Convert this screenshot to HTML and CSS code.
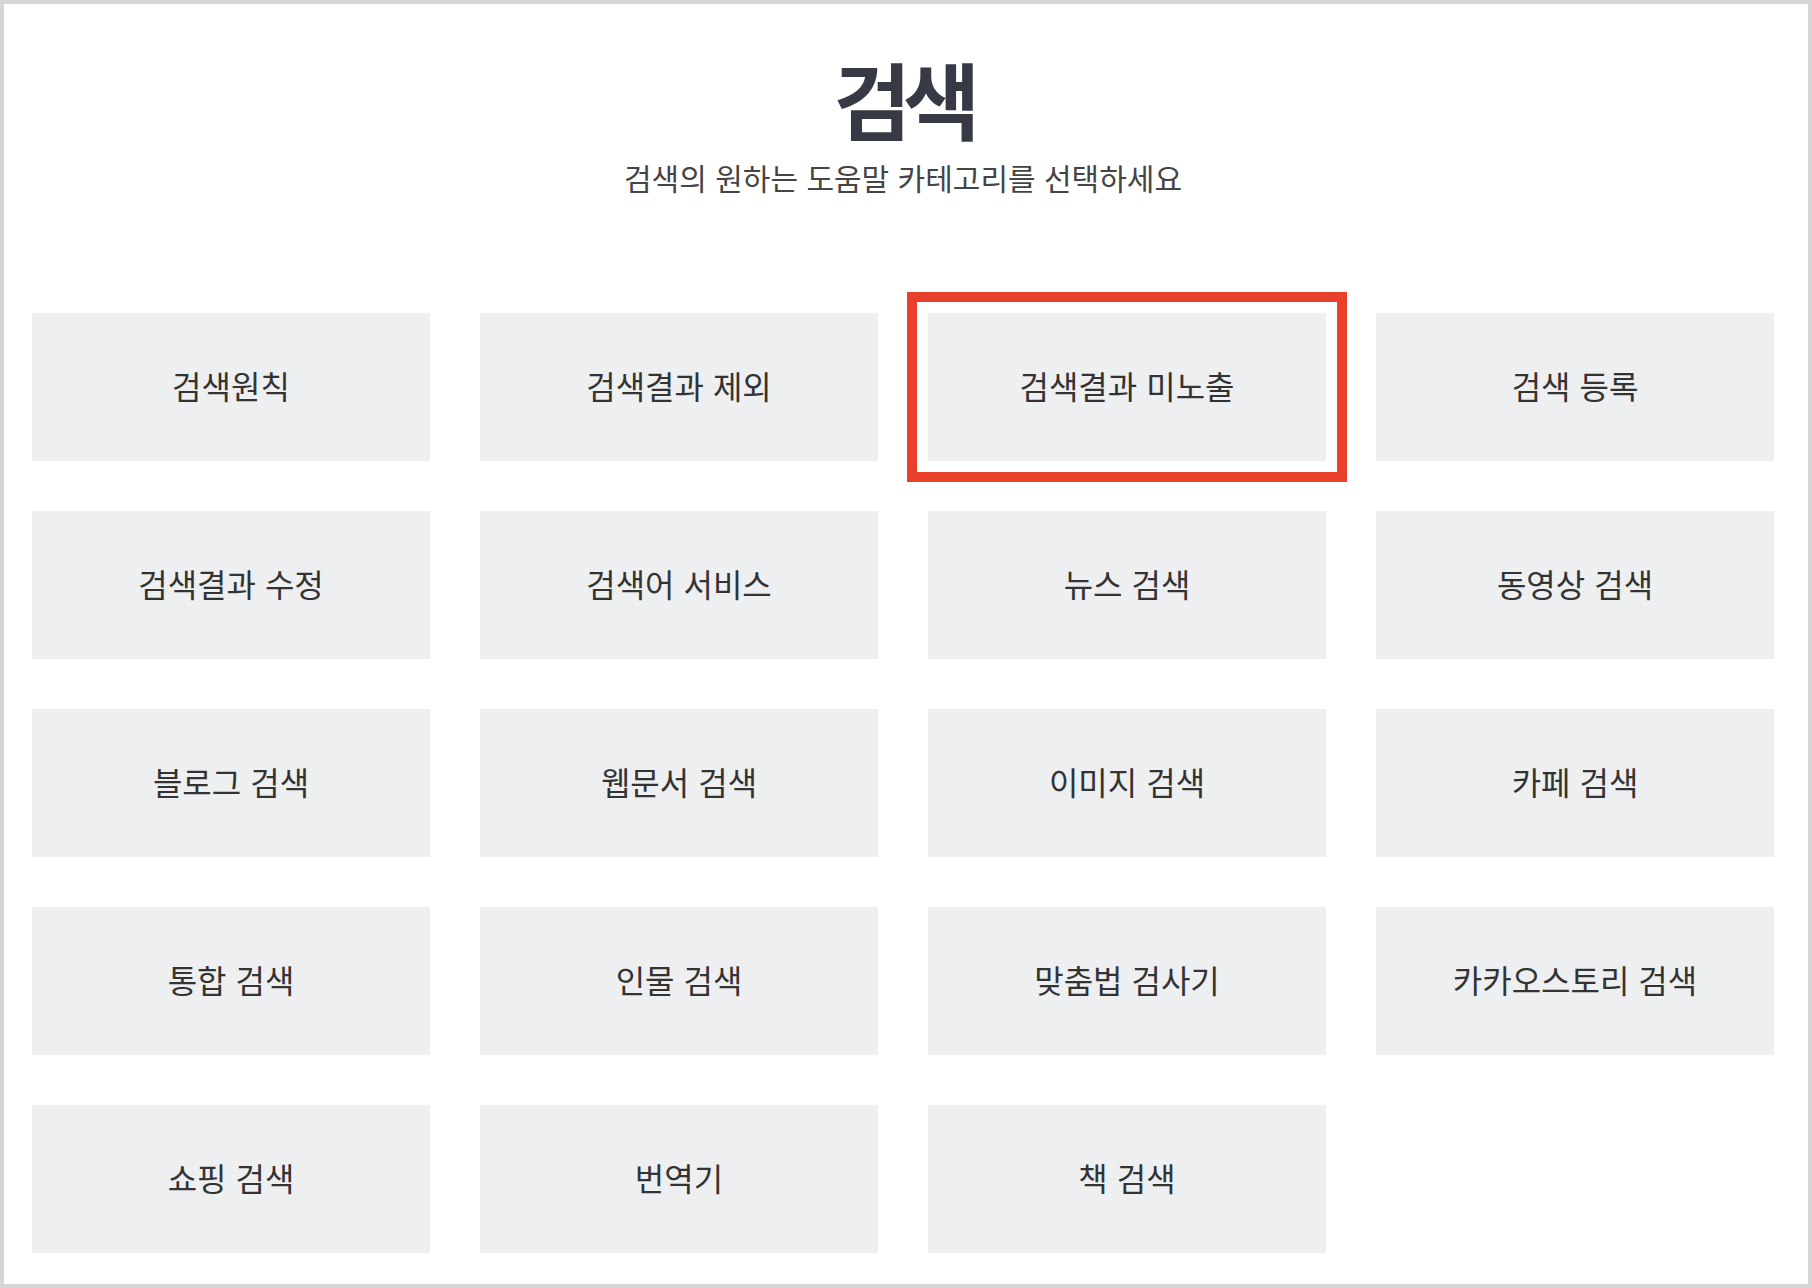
FILE: index.html
```html
<!DOCTYPE html>
<html lang="ko">

<head>
    <meta charset="UTF-8">
    <meta name="viewport" content="width=device-width, initial-scale=1.0">
    <title>검색 도움말</title>
    <link rel="stylesheet" href="styles.css">
</head>

<body>

    <div class="help-box">
        <div class="help-head">
            <h1>검색</h1>
            <p>검색의 원하는 도움말 카테고리를 선택하세요</p>
        </div>

        <ul class="category-grid">
            <li class="category">검색원칙</li>
            <li class="category">검색결과 제외</li>
            <li class="category selected">검색결과 미노출</li>
            <li class="category">검색 등록</li>
            <li class="category">검색결과 수정</li>
            <li class="category">검색어 서비스</li>
            <li class="category">뉴스 검색</li>
            <li class="category">동영상 검색</li>
            <li class="category">블로그 검색</li>
            <li class="category">웹문서 검색</li>
            <li class="category">이미지 검색</li>
            <li class="category">카페 검색</li>
            <li class="category">통합 검색</li>
            <li class="category">인물 검색</li>
            <li class="category">맞춤법 검사기</li>
            <li class="category">카카오스토리 검색</li>
            <li class="category">쇼핑 검색</li>
            <li class="category">번역기</li>
            <li class="category">책 검색</li>
        </ul>
    </div>

</body>

</html>
```

FILE: styles.css
```css
body {
    margin: 0;
    font-family: 'Noto Sans CJK KR', 'Noto Sans', sans-serif;
    background-color: #fff;
}

.help-box {
    box-sizing: border-box;
    height: 1288px;
    border: 4px solid #d6d6d6;
    padding: 0 34px 0 28px;
}

.help-head {
    text-align: center;
    padding-top: 42px;
}

.help-head h1 {
    margin: 0;
    font-size: 84px;
    line-height: 104px;
    font-weight: 700;
    letter-spacing: -8px;
    color: #373a44;
}

.help-head p {
    margin: 7px 0 0;
    font-size: 30px;
    line-height: 40px;
    letter-spacing: 0;
    color: #444;
}

.category-grid {
    list-style: none;
    margin: 116px 0 0;
    padding: 0;
    display: grid;
    grid-template-columns: repeat(4, 1fr);
    column-gap: 50px;
    row-gap: 50px;
}

.category {
    box-sizing: border-box;
    height: 148px;
    padding-bottom: 4px;
    display: flex;
    align-items: center;
    justify-content: center;
    background-color: #eeeff1;
    font-size: 32px;
    letter-spacing: 0;
    color: #333;
}

.category.selected {
    outline: 10px solid #e8402a;
    outline-offset: 11px;
}
```
